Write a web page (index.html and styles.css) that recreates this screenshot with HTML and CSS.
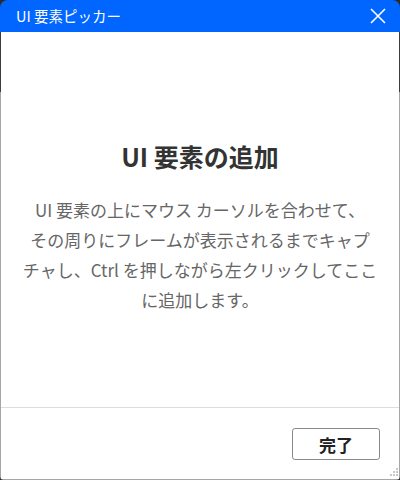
FILE: index.html
```html
<!DOCTYPE html>
<html lang="ja">
<head>
    <meta charset="UTF-8">
    <meta name="viewport" content="width=device-width, initial-scale=1.0">
    <title>UI 要素ピッカー</title>
    <link rel="stylesheet" href="styles.css">
</head>
<body>
    <div class="window">
        <div class="title-bar">
            <span class="title">UI 要素ピッカー</span>
            <button class="close-button" aria-label="閉じる">
                <svg width="16" height="16" viewBox="0 0 16 16">
                    <path d="M1 1 L15 15 M15 1 L1 15" stroke="white" stroke-width="1.6" fill="none"/>
                </svg>
            </button>
        </div>

        <div class="content">
            <h2 class="heading">UI 要素の追加</h2>
            <p class="description">
                UI 要素の上にマウス カーソルを合わせて、<br>
                その周りにフレームが表示されるまでキャプ<br>
                チャし、Ctrl を押しながら左クリックしてここ<br>
                に追加します。
            </p>
        </div>

        <div class="footer">
            <button class="button" id="done">完了</button>
            <svg class="grip" width="10" height="10" viewBox="0 0 10 10">
                <rect x="8" y="0" width="2" height="2" fill="#c8c8c8"/>
                <rect x="5" y="3" width="2" height="2" fill="#c8c8c8"/>
                <rect x="8" y="3" width="2" height="2" fill="#c8c8c8"/>
                <rect x="2" y="6" width="2" height="2" fill="#c8c8c8"/>
                <rect x="5" y="6" width="2" height="2" fill="#c8c8c8"/>
                <rect x="8" y="6" width="2" height="2" fill="#c8c8c8"/>
            </svg>
        </div>
    </div>
</body>
</html>
```

FILE: styles.css
```css
body {
    margin: 0;
    background-color: #2b2b2b;
    font-family: "Noto Sans CJK JP", "Noto Sans", sans-serif;
}

.window {
    width: 400px;
    height: 480px;
    box-sizing: border-box;
    padding: 0 1px 1px 1px;
    display: flex;
    flex-direction: column;
    border-radius: 8px 8px 4px 4px;
    overflow: hidden;
    background: linear-gradient(to bottom, #3c3c3c 92px, #a6a6a6 92px);
}

.title-bar {
    height: 32px;
    margin: 0 -1px;
    padding: 0 14px 0 16px;
    display: flex;
    align-items: center;
    justify-content: space-between;
    background-color: #0066ff;
    color: white;
    flex-shrink: 0;
}

.title {
    font-size: 14.5px;
    line-height: 32px;
}

.close-button {
    width: 16px;
    height: 16px;
    padding: 0;
    border: none;
    background: none;
    display: flex;
}

.content {
    flex: 1;
    background-color: white;
    text-align: center;
    padding-top: 106px;
    border-bottom: 1px solid #dddddd;
}

.heading {
    margin: 0;
    font-size: 25px;
    line-height: 36px;
    font-weight: 700;
    color: #333333;
}

.description {
    margin: 21px 0 0 0;
    font-size: 17px;
    line-height: 30px;
    color: #666666;
    white-space: nowrap;
}

.footer {
    height: 71px;
    box-sizing: border-box;
    background-color: white;
    display: flex;
    justify-content: flex-end;
    align-items: flex-start;
    padding: 20px 19px 0 0;
    position: relative;
}

.button {
    width: 88px;
    height: 32px;
    border: 1px solid #8a8a8a;
    border-radius: 3px;
    background-color: white;
    color: #222222;
    font-family: inherit;
    font-size: 17px;
    font-weight: 700;
    cursor: pointer;
}

.grip {
    position: absolute;
    right: 1px;
    bottom: 1px;
}
```
